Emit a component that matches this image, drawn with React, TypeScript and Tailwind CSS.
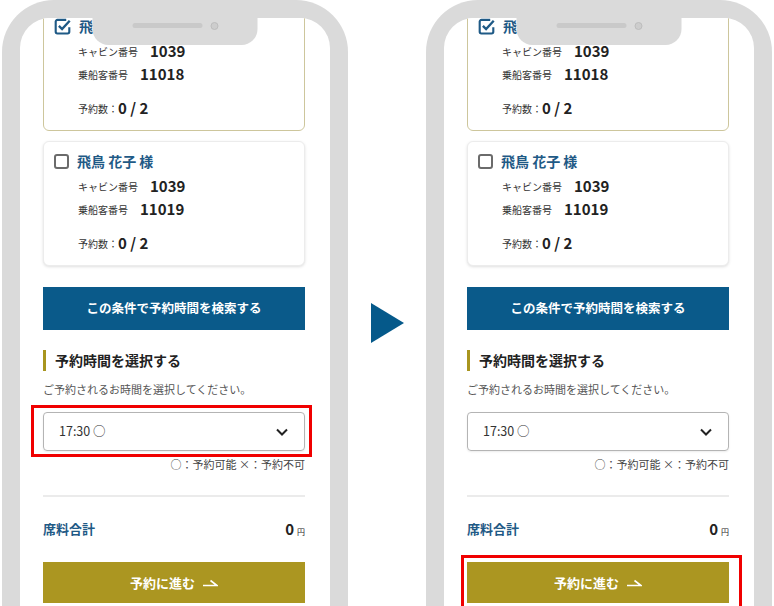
import React from "react";

const font = { fontFamily: '"Noto Sans CJK JP", "Noto Sans", sans-serif' };

type CardProps = {
  checked?: boolean;
  name: string;
  cabin: string;
  passenger: string;
  first?: boolean;
};

const CheckedBox = () => (
  <svg width="17" height="17" viewBox="0 0 16 16" fill="none" className="shrink-0">
    <path
      d="M11.5 1.8H3.2a1.6 1.6 0 0 0-1.6 1.6v9.6a1.6 1.6 0 0 0 1.6 1.6h9.6a1.6 1.6 0 0 0 1.6-1.6V8.6"
      stroke="#1f5a86"
      strokeWidth="2"
    />
    <path d="M4.6 7.4l3 3 7.2-7.8" stroke="#1f5a86" strokeWidth="2.2" />
  </svg>
);

const EmptyBox = () => (
  <span className="block h-[15px] w-[15px] shrink-0 rounded-[3px] border-2 border-[#6b6b6b]" />
);

const PassengerCard = ({ checked, name, cabin, passenger, first }: CardProps) => (
  <div
    className={`rounded-[6px] border bg-white px-[10px] pt-[9px] pb-[10px] ${
      checked ? "border-[#cdc69c]" : "border-[#ececec] shadow-[0_1px_3px_rgba(0,0,0,0.13)]"
    } ${first ? "-mt-[12px]" : "mt-[10px]"}`}
  >
    <div className="flex h-[20px] items-center gap-[8px]">
      {checked ? <CheckedBox /> : <EmptyBox />}
      <span className="text-[14px] font-bold text-[#1f5a86]">{name}</span>
    </div>
    <div className="mt-[4px] pl-[24px] text-[#222]">
      <div className="flex h-[23px] items-center">
        <span className="text-[10px] text-[#333]">キャビン番号</span>
        <span className="ml-[12px] text-[15px] font-bold">{cabin}</span>
      </div>
      <div className="flex h-[23px] items-center">
        <span className="text-[10px] text-[#333]">乗船客番号</span>
        <span className="ml-[12px] text-[15px] font-bold">{passenger}</span>
      </div>
      <div className="mt-[11px] flex h-[23px] items-center">
        <span className="text-[10px] text-[#333]">予約数：</span>
        <span className="text-[15px] font-bold">0 / 2</span>
      </div>
    </div>
  </div>
);

const Phone = ({ highlight }: { highlight: "select" | "button" }) => (
  <div className="relative h-[606px] w-[346px] rounded-t-[52px] bg-[#dadada] px-[18px] pt-[18px]">
    {/* notch */}
    <div className="absolute left-1/2 top-0 z-10 flex h-[45px] w-[165px] -translate-x-1/2 items-start justify-center rounded-b-[16px] bg-[#dadada] pt-[22px]">
      <span className="mt-[1px] block h-[5px] w-[70px] rounded-full bg-[#c9c9c9]" />
      <span className="ml-[8px] block h-[8px] w-[8px] rounded-full border border-[#bdbdbd] bg-[#cdcdcd]" />
    </div>

    <div className="h-full overflow-hidden rounded-t-[30px] bg-white pl-[23px] pr-[25px]">
      <PassengerCard checked first name="飛鳥 太郎 様" cabin="1039" passenger="11018" />
      <PassengerCard name="飛鳥 花子 様" cabin="1039" passenger="11019" />

      <div className="mt-[21px] flex h-[43px] items-center justify-center bg-[#0a5a8a] text-[12.5px] font-bold text-white">
        この条件で予約時間を検索する
      </div>

      <div className="mt-[20px] flex h-[21px] items-center">
        <span className="block h-[21px] w-[3px] bg-[#a8951f]" />
        <span className="ml-[9px] text-[14px] font-bold text-[#222]">予約時間を選択する</span>
      </div>

      <p className="mt-[10px] flex h-[16px] items-center text-[11px] text-[#555]">
        ご予約されるお時間を選択してください。
      </p>

      <div className="relative mt-[15px]">
        <div className="flex h-[39px] items-center justify-between rounded-[4px] border border-[#b4b4b4] pl-[15px] pr-[16px] shadow-[0_1px_2px_rgba(0,0,0,0.08)]">
          <span className="text-[12.5px] text-[#333]">17:30 ○</span>
          <svg width="12" height="8" viewBox="0 0 12 8" fill="none">
            <path d="M1 1.5l5 5 5-5" stroke="#222" strokeWidth="2" />
          </svg>
        </div>
        {highlight === "select" && (
          <div className="absolute -top-[7px] -bottom-[6px] -left-[12px] -right-[7px] border-[3px] border-[#f00000]" />
        )}
      </div>

      <p className="mt-[6px] flex h-[14px] items-center justify-end text-[11px] text-[#444]">
        ○：予約可能 ×：予約不可
      </p>

      <div className="mt-[24px] h-[2px] bg-[#ebebeb]" />

      <div className="mt-[23px] flex h-[18px] items-center justify-between">
        <span className="text-[13px] font-bold text-[#1f5a86]">席料合計</span>
        <span className="flex items-baseline text-[#222]">
          <span className="text-[15px] font-bold">0</span>
          <span className="ml-[3px] text-[8px]">円</span>
        </span>
      </div>

      <div className="relative mt-[24px]">
        <div className="flex h-[41px] items-center justify-center gap-[7px] bg-[#ab9621] text-[13px] font-bold text-white">
          予約に進む
          <svg width="16" height="9" viewBox="0 0 16 9" fill="none">
            <path d="M1 7.5h14L8.5 2.5" stroke="#fff" strokeWidth="1.6" />
          </svg>
        </div>
        {highlight === "button" && (
          <div className="absolute -top-[7px] -bottom-[12px] -left-[6px] -right-[13px] border-[3px] border-[#f00000]" />
        )}
      </div>
    </div>
  </div>
);

export default function App() {
  return (
    <div style={font} className="flex h-[606px] w-[774px] overflow-hidden bg-white">
      <div className="ml-[2px]">
        <Phone highlight="select" />
      </div>
      <div className="flex w-[78px] justify-center pt-[303px]">
        <svg width="33" height="40" viewBox="0 0 33 40">
          <polygon points="0,0 33,20 0,40" fill="#05598a" />
        </svg>
      </div>
      <Phone highlight="button" />
    </div>
  );
}
